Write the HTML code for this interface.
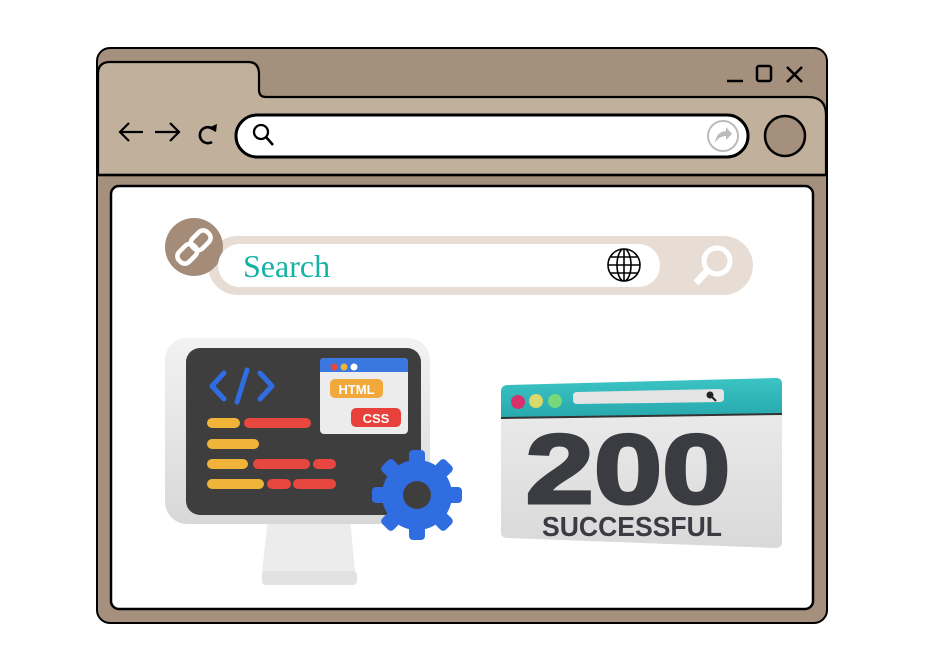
<!DOCTYPE html>
<html><head><meta charset="utf-8"><style>
html,body{margin:0;padding:0;background:#fff;width:927px;height:657px;overflow:hidden}
</style></head><body>
<svg width="927" height="657" viewBox="0 0 927 657" xmlns="http://www.w3.org/2000/svg">
<defs>
<linearGradient id="bz" x1="0" y1="0" x2="0" y2="1"><stop offset="0" stop-color="#f2f2f2"/><stop offset="1" stop-color="#d8d8d8"/></linearGradient>
<linearGradient id="tl" x1="0" y1="0" x2="0" y2="1"><stop offset="0" stop-color="#3cc4c4"/><stop offset="1" stop-color="#27a8ad"/></linearGradient>
<linearGradient id="cb" x1="0" y1="0" x2="0" y2="1"><stop offset="0" stop-color="#eeeeee"/><stop offset="1" stop-color="#d9d9d9"/></linearGradient>
</defs>
<rect x="97" y="48" width="730" height="575" rx="13" fill="#a58f7d" stroke="#000" stroke-width="2"/>
<path d="M98 175 V74 Q98 62 110 62 H248 Q259 62 259 74 V90 Q259 97 266 97 H808 Q826 97 826 115 V175 Z" fill="#c1b09c" stroke="#000" stroke-width="2.2"/>
<line x1="98" y1="175" x2="826" y2="175" stroke="#000" stroke-width="2.5"/>
<line x1="727" y1="81" x2="743" y2="81" stroke="#000" stroke-width="2.5"/>
<rect x="757" y="66" width="14" height="15" rx="2" fill="none" stroke="#000" stroke-width="2.5"/>
<path d="M787 67 L802 82 M802 67 L787 82" stroke="#000" stroke-width="2.5"/>
<path d="M120 132 H143 M129 123 L120 132 L129 141" stroke="#000" stroke-width="2.2" fill="none"/>
<path d="M155 132 H178 M170 123 L179 132 L170 141" stroke="#000" stroke-width="2.2" fill="none"/>
<path d="M213 129 A8 8 0 1 0 212 142" stroke="#000" stroke-width="2.6" fill="none"/>
<path d="M208 128 L217 124 L216 132 Z" fill="#000"/>
<rect x="236" y="115" width="512" height="42" rx="21" fill="#fff" stroke="#000" stroke-width="3"/>
<circle cx="261" cy="132" r="7" fill="none" stroke="#000" stroke-width="2.3"/>
<line x1="266" y1="137" x2="273" y2="145" stroke="#000" stroke-width="2.5"/>
<circle cx="723" cy="136" r="15" fill="none" stroke="#bbb" stroke-width="2"/>
<path d="M715 143 Q716 132 726 131 V127 L732 134 L726 140 V136 Q719 136 715 143 Z" fill="#bbb"/>
<circle cx="785" cy="136" r="20" fill="#a58f7d" stroke="#000" stroke-width="2.5"/>
<rect x="111" y="186" width="702" height="423" rx="8" fill="#fff" stroke="#000" stroke-width="2.5"/>
<rect x="208" y="236" width="545" height="59" rx="29.5" fill="#e7ddd4"/>
<circle cx="194" cy="247" r="29" fill="#a58c78"/>
<rect x="218" y="244" width="442" height="43" rx="21.5" fill="#fff"/>
<g transform="rotate(-45 194 247)" fill="none" stroke="#fff" stroke-width="4.5">
<rect x="174" y="240" width="21" height="14" rx="6"/><rect x="193" y="240" width="21" height="14" rx="6"/>
</g>
<text x="243" y="277" font-family="Liberation Serif, serif" font-size="32" fill="#16b3a4">Search</text>
<g fill="none" stroke="#000" stroke-width="1.6">
<circle cx="624" cy="265" r="16"/><ellipse cx="624" cy="265" rx="7" ry="16"/>
<line x1="624" y1="249" x2="624" y2="281"/><line x1="608" y1="265" x2="640" y2="265"/>
<line x1="611" y1="257" x2="637" y2="257"/><line x1="611" y1="273" x2="637" y2="273"/>
</g>
<circle cx="717" cy="261" r="13" fill="none" stroke="#fff" stroke-width="5"/>
<line x1="707" y1="271" x2="696" y2="283" stroke="#fff" stroke-width="7"/>
<path d="M268 518 L262 572 Q260 585 270 585 H348 Q357 585 355 572 L350 518 Z" fill="#ececec"/>
<rect x="262" y="571" width="95" height="14" rx="4" fill="#e2e2e2"/>
<rect x="165" y="338" width="265" height="186" rx="22" fill="url(#bz)"/>
<rect x="186" y="348" width="235" height="167" rx="14" fill="#3e3e3e"/>
<path d="M224 373 L212 386 L224 399 M260 373 L272 386 L260 399" stroke="#2f6de0" stroke-width="5" fill="none" stroke-linecap="round" stroke-linejoin="round"/>
<line x1="247" y1="370" x2="237" y2="402" stroke="#2f6de0" stroke-width="5" stroke-linecap="round"/>
<g stroke-linecap="round" stroke-width="10">
<line x1="212" y1="423" x2="235" y2="423" stroke="#f1b43b"/><line x1="249" y1="423" x2="306" y2="423" stroke="#e8473f"/>
<line x1="212" y1="444" x2="254" y2="444" stroke="#f1b43b"/>
<line x1="212" y1="464" x2="243" y2="464" stroke="#f1b43b"/><line x1="258" y1="464" x2="305" y2="464" stroke="#e8473f"/><line x1="318" y1="464" x2="331" y2="464" stroke="#e8473f"/>
<line x1="212" y1="484" x2="259" y2="484" stroke="#f1b43b"/><line x1="272" y1="484" x2="286" y2="484" stroke="#e8473f"/><line x1="298" y1="484" x2="331" y2="484" stroke="#e8473f"/>
</g>
<rect x="320" y="358" width="88" height="76" rx="4" fill="#ececec"/>
<path d="M320 372 V362 Q320 358 324 358 H404 Q408 358 408 362 V372 Z" fill="#3a78e0"/>
<circle cx="334" cy="367" r="3.5" fill="#e8473f"/><circle cx="344" cy="367" r="3.5" fill="#f1b43b"/><circle cx="354" cy="367" r="3.5" fill="#fff"/>
<rect x="330" y="379" width="53" height="19" rx="5" fill="#f1a93b"/>
<text x="356.5" y="394" text-anchor="middle" font-family="Liberation Sans, sans-serif" font-weight="bold" font-size="13" fill="#fff">HTML</text>
<rect x="351" y="408" width="50" height="19" rx="5" fill="#e8403a"/>
<text x="376" y="423" text-anchor="middle" font-family="Liberation Sans, sans-serif" font-weight="bold" font-size="13" fill="#fff">CSS</text>
<g transform="translate(417 495)" fill="#2f6de0">
<g id="t"><rect x="-8" y="-45" width="16" height="14" rx="4"/></g>
<use href="#t" transform="rotate(45)"/><use href="#t" transform="rotate(90)"/><use href="#t" transform="rotate(135)"/>
<use href="#t" transform="rotate(180)"/><use href="#t" transform="rotate(225)"/><use href="#t" transform="rotate(270)"/><use href="#t" transform="rotate(315)"/>
<circle r="35"/>
<circle r="14" fill="#3e3e3e"/>
</g>
<path d="M501 392 Q501 385 508 385 L776 378 Q782 378 782 384 V542 Q782 548 776 548 L507 538 Q501 538 501 532 Z" fill="url(#cb)"/>
<path d="M501 418 V392 Q501 385 508 385 L776 378 Q782 378 782 384 V414 Z" fill="url(#tl)"/>
<path d="M501 418 L782 414" stroke="#333" stroke-width="2"/>
<circle cx="518" cy="402" r="7" fill="#d8306a"/><circle cx="536" cy="401" r="7" fill="#d7d96a"/><circle cx="555" cy="401" r="7" fill="#75d97a"/>
<path d="M577 392 L720 389 Q724 389 724 393 V398 Q724 402 720 402 L577 404 Q573 404 573 400 V396 Q573 392 577 392 Z" fill="#e4e4e4"/>
<circle cx="710" cy="395" r="3.5" fill="#222"/><line x1="712" y1="397" x2="716" y2="401" stroke="#222" stroke-width="2"/>
<text x="628" y="503" text-anchor="middle" font-family="Liberation Sans, sans-serif" font-weight="bold" font-size="98" fill="#3a3c42" stroke="#3a3c42" stroke-width="3" textLength="205" lengthAdjust="spacingAndGlyphs">200</text>
<text x="632" y="536" text-anchor="middle" font-family="Liberation Sans, sans-serif" font-weight="bold" font-size="28" fill="#3a3c42" textLength="180" lengthAdjust="spacingAndGlyphs">SUCCESSFUL</text>
</svg>
</body></html>
